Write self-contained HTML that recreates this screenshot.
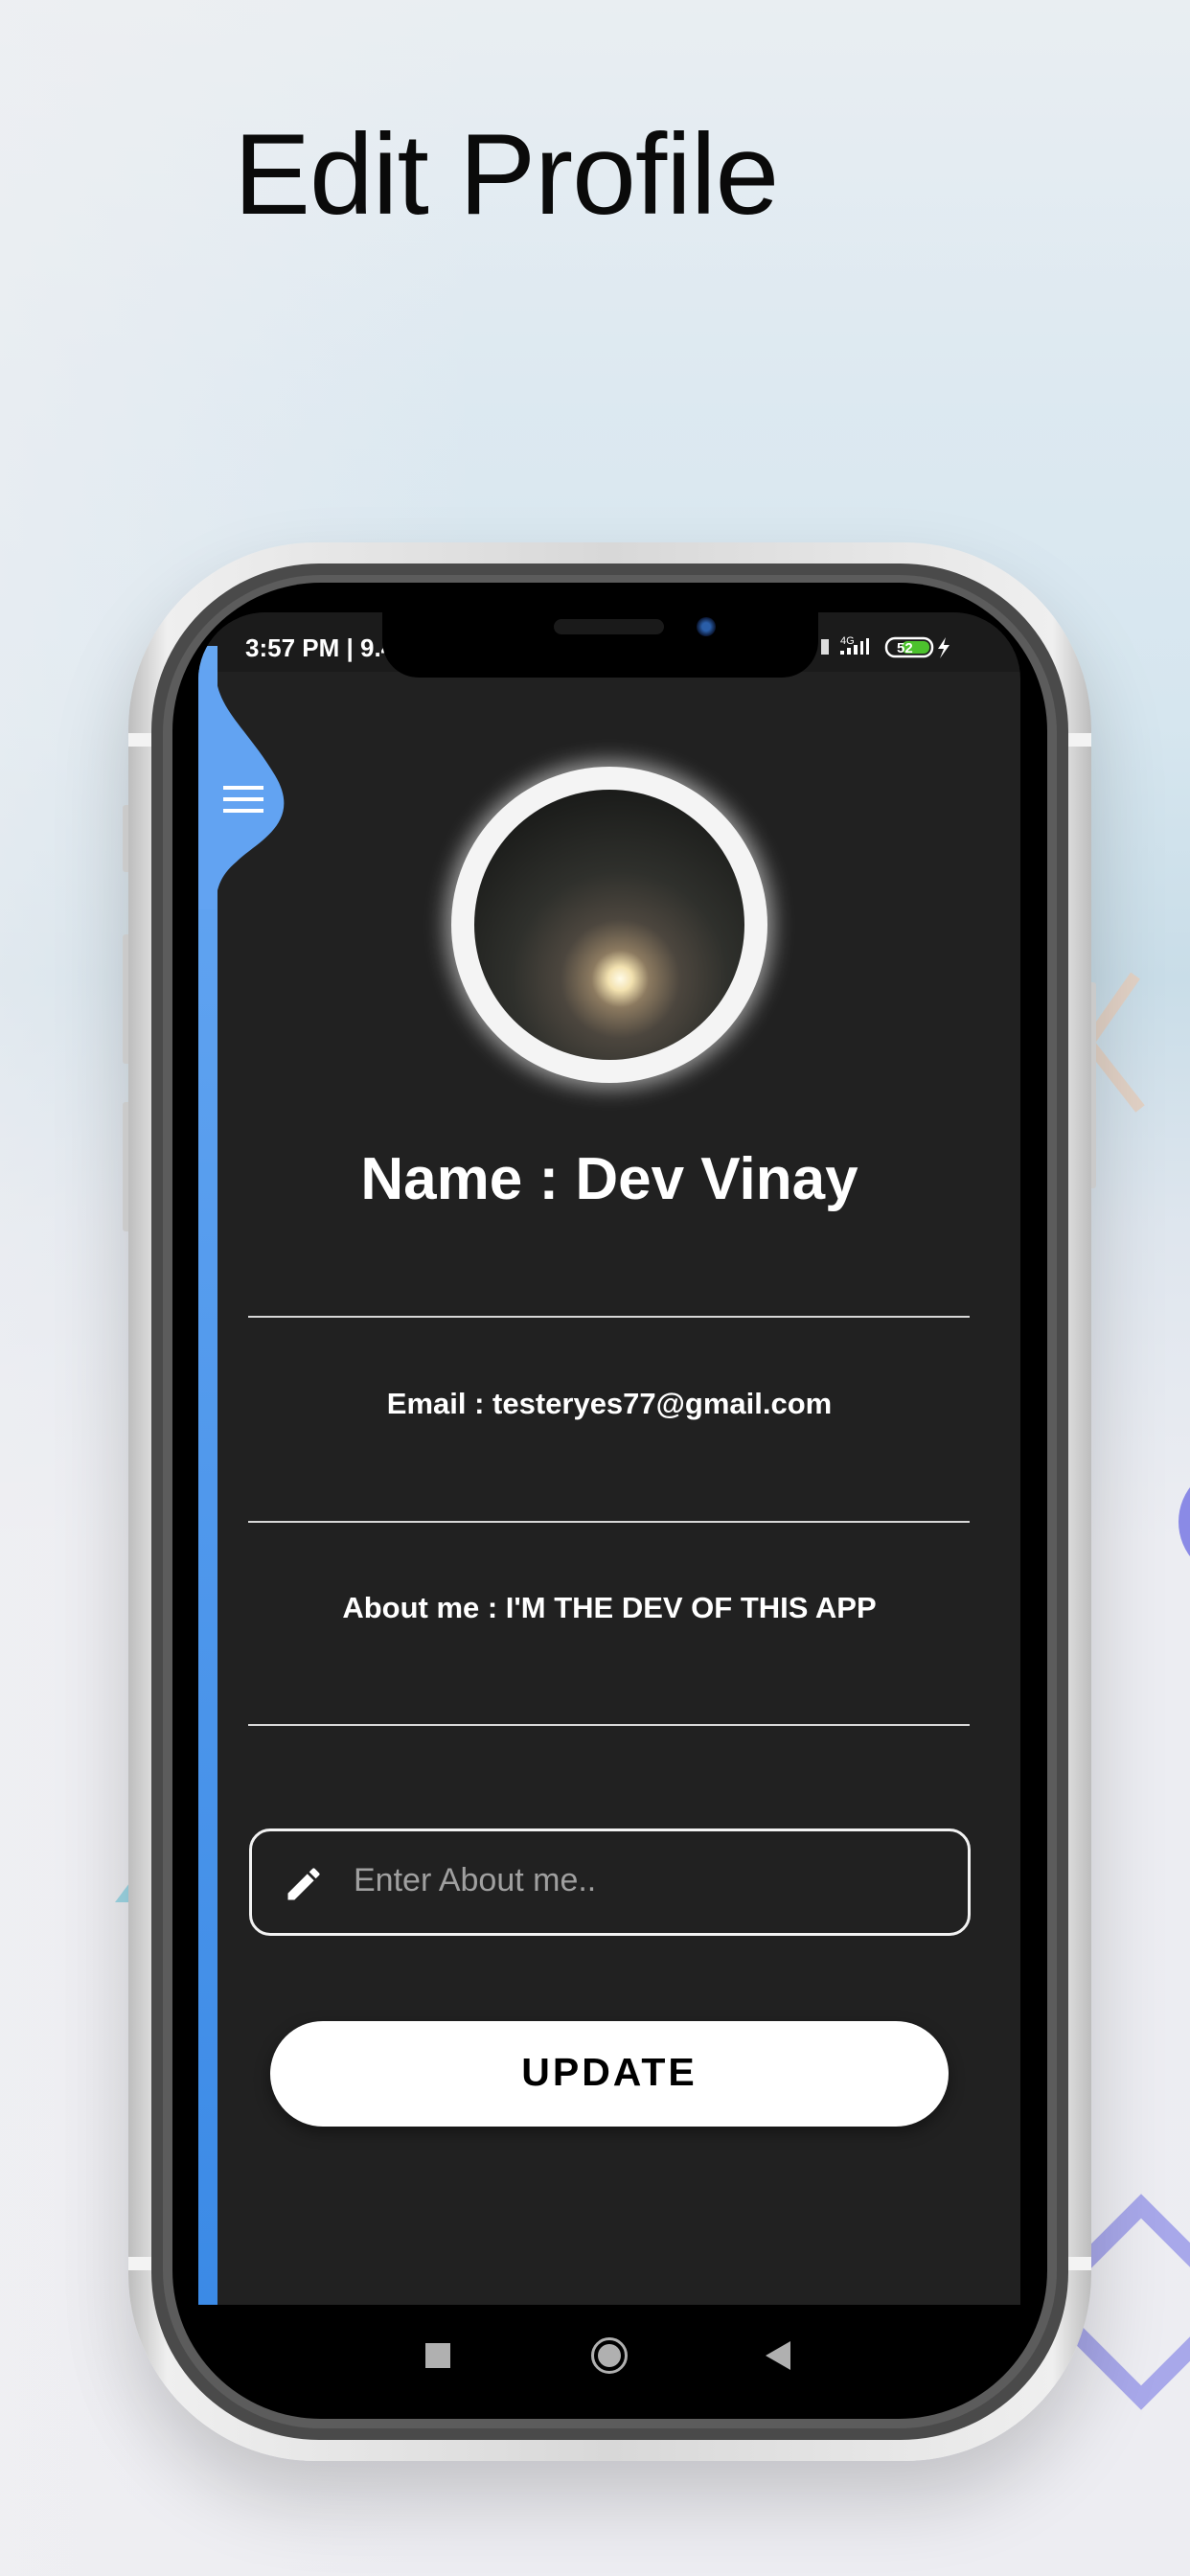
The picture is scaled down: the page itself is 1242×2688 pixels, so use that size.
<!DOCTYPE html>
<html><head><meta charset="utf-8">
<style>
*{margin:0;padding:0;box-sizing:border-box}
body{width:1242px;height:2688px;overflow:hidden;position:relative;font-family:"Liberation Sans",sans-serif;
background:linear-gradient(180deg,#e9eef2 0%,#dde9f1 15%,#d6e6ef 28%,#c9dde8 38%,#dfe6ee 48%,#ecedf2 60%,#ededf2 100%);}
.bgl{position:absolute;left:0;top:0;width:1242px;height:2688px;background:linear-gradient(90deg,rgba(240,240,243,.6),rgba(240,240,243,0) 40%);}
.title{position:absolute;left:244px;top:113px;font-size:120px;color:#0a0a0a;letter-spacing:-1px;font-weight:400}
.abs{position:absolute}
</style></head><body>
<div class="bgl"></div>
<div class="title">Edit Profile</div>
<svg class="abs" style="left:0;top:0" width="1242" height="2688">
 <path d="M1185 1018 L1136 1088 L1190 1157" stroke="#e2d2c6" stroke-width="12" fill="none"/>
 <circle cx="1290" cy="1588" r="60" fill="#8a8ae6"/>
 <path d="M120 1985 L135 1965 L135 1985Z" fill="#9fd8e6"/>
 <path d="M1091 2402 L1191 2302 L1291 2402 L1191 2502Z" stroke="#a8a8ea" stroke-width="18" fill="none"/>
</svg>
<div class="abs" style="left:128px;top:840px;width:10px;height:70px;background:#ddd;border-radius:3px"></div>
<div class="abs" style="left:128px;top:975px;width:10px;height:135px;background:#ddd;border-radius:3px"></div>
<div class="abs" style="left:128px;top:1150px;width:10px;height:135px;background:#ddd;border-radius:3px"></div>
<div class="abs" style="left:1134px;top:1025px;width:10px;height:215px;background:#ddd;border-radius:3px"></div>
<div class="abs" style="left:134px;top:566px;width:1005px;height:2002px;border-radius:195px;background:linear-gradient(90deg,#bdbdbd,#efefef 4%,#d8d8d8 50%,#efefef 96%,#bdbdbd);box-shadow:0 40px 80px rgba(0,0,0,.18)"></div>
<div class="abs" style="left:134px;top:765px;width:1005px;height:14px;background:#f3f3f3"></div>
<div class="abs" style="left:134px;top:2355px;width:1005px;height:14px;background:#f3f3f3"></div>
<div class="abs" style="left:158px;top:588px;width:957px;height:1958px;border-radius:175px;background:#4a4a4a"></div>
<div class="abs" style="left:170px;top:600px;width:933px;height:1934px;border-radius:165px;background:#5c5c5c"></div>
<div class="abs" style="left:180px;top:608px;width:913px;height:1916px;border-radius:155px;background:#000"></div>
<div class="abs" style="left:207px;top:639px;width:858px;height:1766px;background:#212121;border-radius:70px 70px 0 0;overflow:hidden">
  <div class="abs" style="left:0;top:0;width:858px;height:62px;background:#1b1b1b"></div>
  <div class="abs" style="left:0;top:35px;width:20px;height:1731px;background:linear-gradient(180deg,#66a7f2,#3b8ae6)"></div>
  <svg class="abs" style="left:0;top:60px" width="120" height="260"><path d="M0 0 L18 0 C18 40,50 60,80 110 C110 160,60 180,40 200 C22 215,18 230,18 250 L0 250Z" fill="#62a3f2"/></svg>
  <div class="abs" style="left:26px;top:181px;width:42px;height:4px;background:#fff"></div>
  <div class="abs" style="left:26px;top:193px;width:42px;height:4px;background:#fff"></div>
  <div class="abs" style="left:26px;top:205px;width:42px;height:4px;background:#fff"></div>
  <div class="abs" style="left:49px;top:22px;color:#fff;font-weight:bold;font-size:26px">3:57 PM | 9.4</div>
  <svg class="abs" style="left:650px;top:22px" width="200" height="30">
   <rect x="0" y="6" width="8" height="16" fill="#ddd"/>
   <text x="20" y="11" font-size="11" fill="#fff" font-family="Liberation Sans">4G</text>
   <path d="M20 22h4v-4h-4zM27 22h4v-7h-4zM34 22h4v-10h-4zM41 22h3v-14h-3zM47 22h3v-17h-3z" fill="#fff"/>
   <rect x="68" y="5" width="48" height="19" rx="9" fill="none" stroke="#fff" stroke-width="2.5"/>
   <rect x="84" y="8" width="29" height="13" rx="6" fill="#4cc22d"/>
   <text x="79" y="20" font-size="15" font-weight="bold" fill="#fff" font-family="Liberation Sans">52</text>
   <path d="M130 4 L122 16 H128 L124 26 L134 12 H128Z" fill="#fff"/>
  </svg>
  <div class="abs" style="left:264px;top:161px;width:330px;height:330px;border-radius:50%;background:#f4f4f4;box-shadow:0 0 22px 6px rgba(255,255,255,.55)"></div>
  <div class="abs" style="left:288px;top:185px;width:282px;height:282px;border-radius:50%;background:radial-gradient(circle at 54% 70%,#fffbe8 0,#f3e2b0 5%,#8c7a60 12%,#4c463e 25%,#2f302c 45%,#1d1e1c 75%,#111 100%)"></div>
  <div class="abs" style="left:0;top:556px;width:858px;text-align:center;color:#fff;font-weight:bold;font-size:62px">Name : Dev Vinay</div>
  <div class="abs" style="left:52px;top:734px;width:753px;height:2px;background:#d8d8d8"></div>
  <div class="abs" style="left:0;top:808px;width:858px;text-align:center;color:#fff;font-weight:bold;font-size:31px">Email : testeryes77@gmail.com</div>
  <div class="abs" style="left:52px;top:948px;width:753px;height:2px;background:#d8d8d8"></div>
  <div class="abs" style="left:0;top:1021px;width:858px;text-align:center;color:#fff;font-weight:bold;font-size:31px">About me : I'M THE DEV OF THIS APP</div>
  <div class="abs" style="left:52px;top:1160px;width:753px;height:2px;background:#d8d8d8"></div>
  <div class="abs" style="left:53px;top:1269px;width:753px;height:112px;border:3px solid #f2f2f2;border-radius:22px"></div>
  <svg class="abs" style="left:88px;top:1305px" width="44" height="44" viewBox="0 0 24 24"><path d="M3 17.25V21h3.75L17.81 9.94l-3.75-3.75L3 17.25zM20.71 7.04a1 1 0 000-1.41l-2.34-2.34a1 1 0 00-1.410 0l-1.83 1.83 3.75 3.75 1.83-1.83z" fill="#fff"/></svg>
  <div class="abs" style="left:162px;top:1304px;color:#a0a0a0;font-size:34px">Enter About me..</div>
  <div class="abs" style="left:75px;top:1470px;width:708px;height:110px;border-radius:55px;background:#fff;box-shadow:0 6px 16px rgba(0,0,0,.4)"></div>
  <div class="abs" style="left:75px;top:1500px;width:708px;text-align:center;color:#000;font-weight:bold;font-size:41px;letter-spacing:3px">UPDATE</div>
</div>
<div class="abs" style="left:399px;top:620px;width:455px;height:87px;background:#000;border-radius:0 0 38px 38px"></div>
<div class="abs" style="left:578px;top:646px;width:115px;height:16px;background:#1a1a1a;border-radius:8px"></div>
<div class="abs" style="left:727px;top:644px;width:20px;height:20px;background:radial-gradient(circle,#2a5ea8 30%,#0a1530 70%);border-radius:50%"></div>
<div class="abs" style="left:444px;top:2445px;width:26px;height:26px;background:#b0b0b0"></div>
<div class="abs" style="left:617px;top:2439px;width:38px;height:38px;border-radius:50%;border:3px solid #b0b0b0"></div>
<div class="abs" style="left:624px;top:2446px;width:24px;height:24px;border-radius:50%;background:#b0b0b0"></div>
<svg class="abs" style="left:799px;top:2443px" width="28" height="30"><path d="M26 0 V30 L0 15Z" fill="#b0b0b0"/></svg>
</body></html>
